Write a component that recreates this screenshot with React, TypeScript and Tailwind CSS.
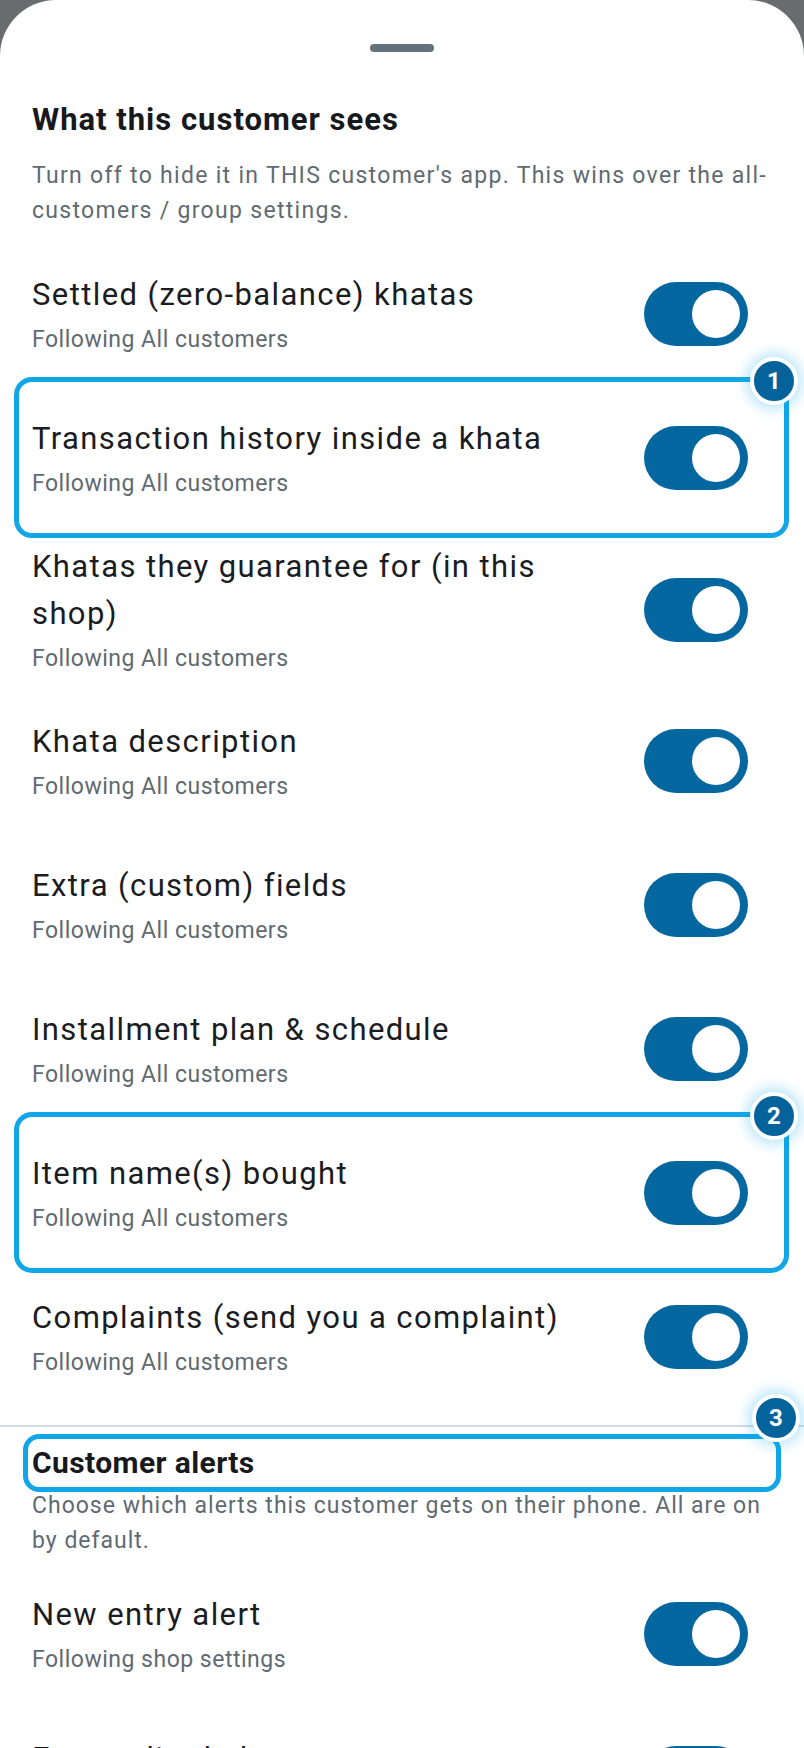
import React from "react";

type RowItem = { title: string; sub: string; mark?: number };

const seesRows: RowItem[] = [
  { title: "Settled (zero-balance) khatas", sub: "Following All customers" },
  { title: "Transaction history inside a khata", sub: "Following All customers", mark: 1 },
  { title: "Khatas they guarantee for (in this shop)", sub: "Following All customers" },
  { title: "Khata description", sub: "Following All customers" },
  { title: "Extra (custom) fields", sub: "Following All customers" },
  { title: "Installment plan & schedule", sub: "Following All customers" },
  { title: "Item name(s) bought", sub: "Following All customers", mark: 2 },
  { title: "Complaints (send you a complaint)", sub: "Following All customers" },
];

const alertRows: RowItem[] = [
  { title: "New entry alert", sub: "Following shop settings" },
  { title: "Entry edited alert", sub: "Following shop settings" },
];

function Toggle() {
  return (
    <div className="w-[104px] h-[64px] shrink-0 rounded-full bg-[#05679f] flex items-center justify-end pr-[8px]">
      <div className="w-[48px] h-[48px] rounded-full bg-white" />
    </div>
  );
}

function Badge({ n, className }: { n: number; className: string }) {
  return (
    <div
      className={
        "absolute z-10 w-[48px] h-[48px] rounded-full bg-[#05639c] border-[4px] border-white flex items-center justify-center text-white text-[24px] font-bold shadow-[0_0_14px_4px_rgba(14,165,233,0.3)] " +
        className
      }
    >
      {n}
    </div>
  );
}

function Row({ item }: { item: RowItem }) {
  return (
    <div className="relative flex items-center gap-[32px] min-h-[144px] py-[13px] pl-[32px] pr-[56px]">
      <div className="flex-1 min-w-0">
        <div className="text-[31px] leading-[47px] tracking-[1.4px] text-[#1a1c1f]">{item.title}</div>
        <div className="mt-[4px] text-[23px] leading-[35px] tracking-[0.5px] text-[#5f6a73]">{item.sub}</div>
      </div>
      <Toggle />
      {item.mark && (
        <>
          <div className="absolute left-[14px] right-[15px] -top-[9px] -bottom-[8px] border-[5px] border-[#10a6e8] rounded-[18px] pointer-events-none" />
          <Badge n={item.mark} className="-top-[29px] right-[6px]" />
        </>
      )}
    </div>
  );
}

export default function App() {
  return (
    <div
      className="w-full h-[1748px] overflow-hidden bg-[#696b6e]"
      style={{ fontFamily: "Roboto, 'Noto Sans', sans-serif" }}
    >
      <div className="h-full bg-white rounded-t-[56px] pt-[44px]">
        {/* drag handle */}
        <div className="mx-auto w-[64px] h-[8px] rounded-full bg-[#64727c]" />

        <div className="pl-[32px] pr-[24px]">
          <h2 className="mt-[48px] text-[31px] leading-[40px] tracking-[1px] font-bold text-[#17191c]">
            What this customer sees
          </h2>
          <p className="mt-[18px] text-[23px] leading-[35px] tracking-[1.3px] text-[#5f6a73]">
            Turn off to hide it in THIS customer's app. This wins over the all-customers / group settings.
          </p>
        </div>

        <div className="mt-[14px]">
          {seesRows.map((r) => (
            <Row key={r.title} item={r} />
          ))}
        </div>

        <div className="mt-[16px] h-[2px] bg-[#d3dde5]" />

        <div className="px-[32px]">
          <div className="relative mt-[16px]">
            <h2 className="text-[30px] leading-[40px] tracking-[0.4px] font-bold text-[#17191c]">Customer alerts</h2>
            <div className="absolute -left-[9px] -right-[9px] -top-[9px] -bottom-[9px] border-[5px] border-[#10a6e8] rounded-[16px] pointer-events-none" />
            <Badge n={3} className="-top-[49px] -right-[28px]" />
          </div>
          <p className="mt-[5px] -mr-[8px] text-[23px] leading-[35px] tracking-[1px] text-[#5f6a73]">
            Choose which alerts this customer gets on their phone. All are on by default.
          </p>
        </div>

        <div className="mt-[4px]">
          {alertRows.map((r) => (
            <Row key={r.title} item={r} />
          ))}
        </div>
      </div>
    </div>
  );
}
